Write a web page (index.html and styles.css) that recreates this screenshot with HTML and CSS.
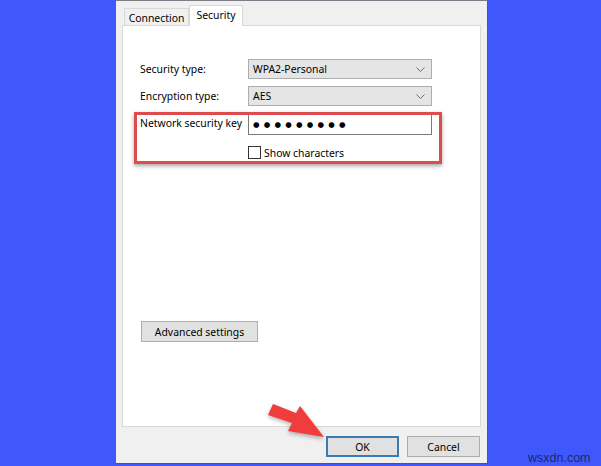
FILE: index.html
```html
<!DOCTYPE html>
<html>
<head>
<meta charset="utf-8">
<link rel="stylesheet" href="styles.css">
</head>
<body>
<div class="dialog">
  <div class="tabs">
    <div class="tab">Connection</div>
    <div class="tab active">Security</div>
  </div>
  <div class="panel">
    <div class="row">
      <span class="label">Security type:</span>
      <div class="combo"><span>WPA2-Personal</span><svg class="chev" width="9" height="5" viewBox="0 0 9 5"><path d="M0.5 0.5 L4.5 4.5 L8.5 0.5" fill="none" stroke="#6f6f6f" stroke-width="1"/></svg></div>
    </div>
    <div class="row">
      <span class="label">Encryption type:</span>
      <div class="combo"><span>AES</span><svg class="chev" width="9" height="5" viewBox="0 0 9 5"><path d="M0.5 0.5 L4.5 4.5 L8.5 0.5" fill="none" stroke="#6f6f6f" stroke-width="1"/></svg></div>
    </div>
    <div class="row row-key">
      <span class="label">Network security key</span>
      <div class="input"><span class="dots">●●●●●●●●●</span></div>
    </div>
    <div class="row row-check">
      <span class="label"></span>
      <label class="check"><span class="box"></span>Show characters</label>
    </div>
    <div class="highlight"></div>
    <button class="btn adv">Advanced settings</button>
  </div>
  <div class="footer">
    <button class="btn ok">OK</button>
    <button class="btn">Cancel</button>
  </div>
</div>
<svg class="arrow" width="80" height="50" viewBox="260 395 80 50">
  <polygon points="273,404 268,415 292,423 288,431 324,437 300,406 296,413" fill="#f03c3c"/>
</svg>
<div class="watermark">wsxdn.com</div>
</body>
</html>
```
FILE: styles.css
```css
html, body {
  margin: 0;
  padding: 0;
}
body {
  width: 601px;
  height: 466px;
  overflow: hidden;
  background: #4058fb;
  display: flex;
  align-items: flex-start;
  position: relative;
  font-family: "Noto Sans", "DejaVu Sans", sans-serif;
  font-size: 10.4px;
  color: #000;
}
.dialog {
  margin-left: 116px;
  width: 372px;
  height: 464px;
  box-sizing: border-box;
  background: #f0f0f0;
  border-right: 1px solid #5a5a66;
  border-bottom: 1px solid #55555f;
  border-top: 1px solid #7d7d88;
  padding: 4px 0 0 6px;
  display: flex;
  flex-direction: column;
}
.tabs {
  display: flex;
  align-items: flex-end;
  height: 20px;
  padding-left: 2px;
  position: relative;
  z-index: 1;
}
.tab {
  box-sizing: border-box;
  height: 17px;
  width: 65px;
  border: 1px solid #d9d9d9;
  border-bottom: none;
  background: #f0f0f0;
  display: flex;
  align-items: center;
  justify-content: center;
  padding-top: 1px;
}
.tab.active {
  height: 21px;
  width: 54px;
  background: #fff;
  margin-bottom: -1px;
  align-items: flex-start;
  padding-top: 2px;
}
.panel {
  box-sizing: border-box;
  width: 359px;
  height: 402px;
  background: #fff;
  border: 1px solid #d9d9d9;
  position: relative;
  padding: 33px 0 0 17px;
  display: flex;
  flex-direction: column;
}
.row {
  display: flex;
  align-items: center;
  margin-bottom: 7px;
}
.label {
  width: 108px;
  flex: none;
}
.combo {
  box-sizing: border-box;
  width: 184px;
  height: 20px;
  background: #e5e5e5;
  border: 1px solid #adadad;
  display: flex;
  align-items: center;
  justify-content: space-between;
  padding: 0 6px 0 4px;
}
.input {
  box-sizing: border-box;
  width: 184px;
  height: 22px;
  background: #fff;
  border: 1px solid #7a7a7a;
  display: flex;
  align-items: center;
  padding-left: 4px;
}
.dots {
  font-size: 7.5px;
  letter-spacing: 4.2px;
  font-family: "DejaVu Sans", sans-serif;
}
.row-key {
  align-items: flex-start;
  margin-bottom: 11px;
}
.row-key .label {
  padding-top: 3px;
}
.row-check {
  height: 13px;
}
.check {
  display: flex;
  align-items: center;
  gap: 3px;
}
.box {
  box-sizing: border-box;
  width: 13px;
  height: 13px;
  border: 1px solid #333;
  background: #fff;
}
.highlight {
  position: absolute;
  left: 11px;
  top: 86px;
  width: 308px;
  height: 52px;
  box-sizing: border-box;
  border: 3px solid #dc4c4e;
  box-shadow: 0 2px 4px rgba(0,0,0,0.35);
}
.btn {
  box-sizing: border-box;
  font-family: inherit;
  font-size: 10.4px;
  color: #000;
  background: #e1e1e1;
  border: 1px solid #adadad;
  height: 21px;
  width: 73px;
  padding: 0;
  border-radius: 0;
}
.adv {
  align-self: flex-start;
  width: 117px;
  margin-top: 155px;
  margin-left: 1px;
}
.footer {
  display: flex;
  justify-content: flex-end;
  gap: 8px;
  padding: 9px 7px 0 0;
}
.ok {
  border: 2px solid #3a7cb0;
}
.arrow {
  position: absolute;
  left: 260px;
  top: 395px;
  filter: drop-shadow(0 2px 2px rgba(0,0,0,0.3));
}
.watermark {
  position: absolute;
  left: 528px;
  top: 452px;
  line-height: 13px;
  font-size: 12.5px;
  color: #1b2a66;
  font-family: "Liberation Sans", Arial, sans-serif;
}
```
